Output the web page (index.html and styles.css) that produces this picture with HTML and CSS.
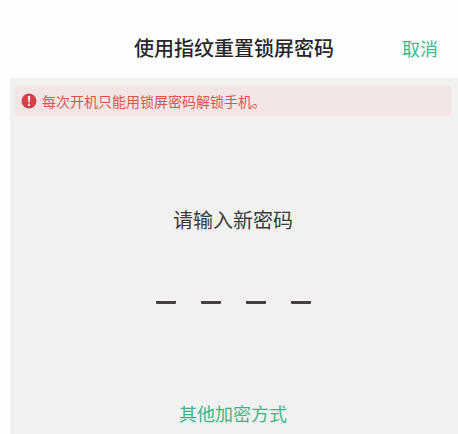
FILE: index.html
```html
<!DOCTYPE html>
<html lang="zh-CN">
<head>
<meta charset="utf-8">
<meta name="viewport" content="width=device-width, initial-scale=1">
<title>使用指纹重置锁屏密码</title>
<link rel="stylesheet" href="styles.css">
</head>
<body>
<header class="topbar">
  <h1 class="title">使用指纹重置锁屏密码</h1>
  <button class="cancel" type="button">取消</button>
</header>
<main class="panel">
  <p class="notice" role="alert">
    <svg class="notice-icon" viewBox="0 0 16 16" aria-hidden="true">
      <circle cx="8" cy="8" r="7.5" fill="#d44248"/>
      <path d="M6.8 3h2.4l-.4 6.3H7.2z" fill="#fbe4e3"/>
      <circle cx="8" cy="11.8" r="1.2" fill="#fbe4e3"/>
    </svg>
    <span>每次开机只能用锁屏密码解锁手机。</span>
  </p>
  <form class="pin-form">
    <h2 class="prompt" id="prompt">请输入新密码</h2>
    <div class="pin" role="group" aria-labelledby="prompt">
      <input class="digit" type="password" inputmode="numeric" maxlength="1" aria-labelledby="prompt">
      <input class="digit" type="password" inputmode="numeric" maxlength="1" aria-labelledby="prompt">
      <input class="digit" type="password" inputmode="numeric" maxlength="1" aria-labelledby="prompt">
      <input class="digit" type="password" inputmode="numeric" maxlength="1" aria-labelledby="prompt">
    </div>
    <a class="other" href="#">其他加密方式</a>
  </form>
</main>
</body>
</html>
```

FILE: styles.css
```css
* {
  box-sizing: border-box;
}

body {
  display: flex;
  flex-direction: column;
  min-height: 100vh;
  margin: 0;
  padding-left: 10px;
  background: #fefefe;
  color: #333;
  font-family: "Noto Sans CJK SC", sans-serif;
}

.topbar {
  display: grid;
  grid-template-columns: 1fr auto 1fr;
  align-items: center;
  padding: 34px 20px 16px 20px;
}

.title {
  grid-column: 2;
  margin: 0;
  font-size: 20px;
  font-weight: 500;
  line-height: 28px;
  color: #262626;
}

.cancel {
  justify-self: end;
  padding: 0;
  border: 0;
  background: none;
  color: #3dba8c;
  font: inherit;
  font-size: 18px;
  line-height: 28px;
}

.panel {
  flex: 1;
  padding: 8px 7px 6px 5px;
  background: #f1f1f1;
}

.notice {
  display: flex;
  align-items: center;
  gap: 5px;
  margin: 0;
  padding: 0 5px;
  border: 1px solid #eee2e1;
  border-radius: 4px;
  background: #f1e6e5;
  color: #e0524f;
  font-size: 14px;
  line-height: 28px;
}

.notice-icon {
  flex: none;
  width: 16px;
  height: 16px;
}

.pin-form {
  display: flex;
  flex-direction: column;
  align-items: center;
}

.prompt {
  margin: 90px 0 0;
  font-size: 20px;
  font-weight: 400;
  line-height: 28px;
  color: #3c3c3c;
}

.pin {
  display: flex;
  gap: 25px;
  margin-top: 42px;
}

.digit {
  width: 20px;
  height: 28px;
  padding: 0;
  border: 0;
  border-bottom: 3px solid #453f3f;
  border-radius: 1px;
  background: none;
  color: #3c3c3c;
  font: inherit;
  font-size: 18px;
  text-align: center;
  outline: none;
}

.other {
  margin-top: 95px;
  color: #3fb587;
  font-size: 18px;
  line-height: 28px;
  text-decoration: none;
}
```
